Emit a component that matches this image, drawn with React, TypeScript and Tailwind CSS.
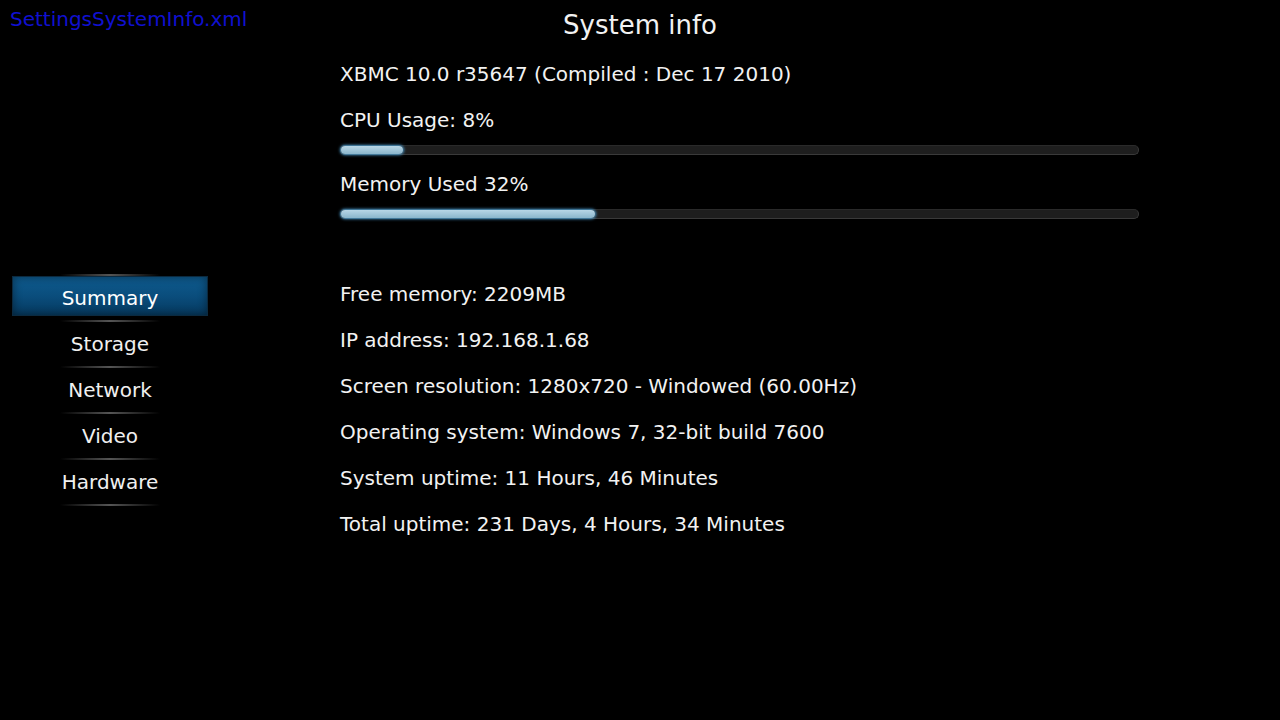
import React from "react";

const menu = ["Summary", "Storage", "Network", "Video", "Hardware"];

const details = [
  "Free memory: 2209MB",
  "IP address: 192.168.1.68",
  "Screen resolution: 1280x720 - Windowed (60.00Hz)",
  "Operating system: Windows 7, 32-bit build 7600",
  "System uptime: 11 Hours, 46 Minutes",
  "Total uptime: 231 Days, 4 Hours, 34 Minutes",
];

const Bar = ({ percent, fillWidth }: { percent: number; fillWidth: number }) => (
  <div
    className="h-[10px] w-[799px] rounded-full bg-[#1e1e1e] border border-[#3a3a3a] border-t-[#2a2a2a] flex"
    title={`${percent}%`}
  >
    <div
      className="h-full rounded-full bg-gradient-to-b from-[#b8d6e6] to-[#8ab6cc] shadow-[0_0_3px_1px_#4a9cd0]"
      style={{ width: fillWidth }}
    />
  </div>
);

const Separator = () => (
  <div className="h-[2px] w-[100px] bg-gradient-to-r from-transparent via-[#555] to-transparent" />
);

const App = () => {
  return (
    <div
      className="w-[1280px] h-[720px] bg-black text-white flex flex-col relative overflow-hidden"
      style={{ fontFamily: '"DejaVu Sans", sans-serif' }}
    >
      <div className="absolute left-[10px] top-[6px] text-[20px] leading-[26px] text-[#1010d0]">
        SettingsSystemInfo.xml
      </div>

      <div className="h-[50px] flex items-center justify-center text-[26px] text-[#f2f2f2]">
        System info
      </div>

      <div className="flex">
        {/* side menu */}
        <div className="w-[340px] pl-[12px] pt-[224px] flex flex-col">
          <div className="w-[196px] flex justify-center">
            <Separator />
          </div>
          {menu.map((item, i) => (
            <div key={item} className="w-[196px] flex flex-col items-center">
              {i === 0 ? (
                <div className="h-[44px] w-full flex flex-col">
                  <div className="h-[40px] w-full flex items-center justify-center pt-[3px] text-[20px] bg-gradient-to-b from-[#0e5b8f] via-[#0a4d7c] to-[#063a60] border border-[#0b2a40] shadow-[inset_0_0_10px_rgba(0,0,0,0.45)]">
                    {item}
                  </div>
                </div>
              ) : (
                <div className="h-[44px] w-full flex items-center justify-center text-[20px] text-[#f0f0f0]">
                  {item}
                </div>
              )}
              <Separator />
            </div>
          ))}
        </div>

        {/* info column */}
        <div className="flex flex-col text-[20px] text-[#f2f2f2]">
          <div className="h-[48px] flex items-center">XBMC 10.0 r35647 (Compiled : Dec 17 2010)</div>
          <div className="h-[44px] flex items-center">CPU Usage: 8%</div>
          <div className="mt-[3px]">
            <Bar percent={8} fillWidth={62} />
          </div>
          <div className="mt-[6px] h-[46px] flex items-center">Memory Used 32%</div>
          <div className="mt-[2px]">
            <Bar percent={32} fillWidth={254} />
          </div>
          <div className="mt-[52px] flex flex-col">
            {details.map((d) => (
              <div key={d} className="h-[46px] flex items-center">
                {d}
              </div>
            ))}
          </div>
        </div>
      </div>
    </div>
  );
};

export default App;
